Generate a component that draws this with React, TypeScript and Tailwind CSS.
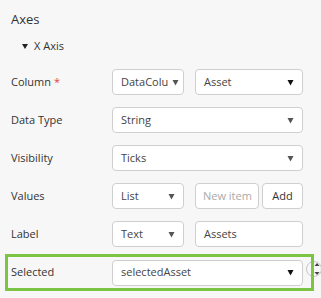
import React from "react";

function Caret({ dark }: { dark?: boolean }) {
  return (
    <svg width="7" height="7" viewBox="0 0 7 7" className="shrink-0 ml-[4px]">
      <path d="M0.5 1 H6.5 L3.5 6.5 Z" fill={dark ? "#111" : "#555"} />
    </svg>
  );
}

function Select({ value, w, dark }: { value: string; w: string; dark?: boolean }) {
  return (
    <div
      className={`${w} h-[26px] flex items-center justify-between pl-[8px] pr-[8px] bg-white border border-[#cfcfcf] rounded-[4px] text-[#444] whitespace-nowrap`}
    >
      <span>{value}</span>
      <Caret dark={dark} />
    </div>
  );
}

function Row({ label, children, required }: { label: string; children: React.ReactNode; required?: boolean }) {
  return (
    <div className="flex items-center h-[26px]">
      <div className="w-[112px] pl-[11px] text-[#333]">
        {label}
        {required && <span className="text-[#e04848] ml-[3px]">*</span>}
      </div>
      {children}
    </div>
  );
}

export default function App() {
  return (
    <div className="relative w-[321px] h-[298px] bg-[#f7f7f7] overflow-hidden font-['Open_Sans',sans-serif] text-[11px]">
      <div className="pl-[11px] pt-[9px] text-[13px] leading-[20px] text-[#333]">Axes</div>
      <div className="flex items-center h-[18px] mt-[8px] pl-[22px] text-[#333]">
        <svg width="6" height="5" viewBox="0 0 6 5" className="mr-[6px]">
          <path d="M0 0 H6 L3 5 Z" fill="#222" />
        </svg>
        X Axis
      </div>
      <div className="flex flex-col gap-[12px] mt-[14px]">
        <Row label="Column" required>
          <Select value="DataColu" w="w-[72px]" />
          <div className="ml-[11px]">
            <Select value="Asset" w="w-[108px]" dark />
          </div>
        </Row>
        <Row label="Data Type">
          <Select value="String" w="w-[191px]" />
        </Row>
        <Row label="Visibility">
          <Select value="Ticks" w="w-[191px]" />
        </Row>
        <Row label="Values">
          <Select value="List" w="w-[72px]" />
          <div className="ml-[11px] w-[64px] h-[26px] flex items-center pl-[7px] bg-white border border-[#cfcfcf] rounded-[4px] text-[#aaa] whitespace-nowrap">
            New item
          </div>
          <div className="ml-[3px] w-[41px] h-[26px] flex items-center justify-center bg-white border border-[#cfcfcf] rounded-[4px] text-[#333]">
            Add
          </div>
        </Row>
        <Row label="Label">
          <Select value="Text" w="w-[72px]" />
          <div className="ml-[11px] w-[108px] h-[26px] flex items-center pl-[8px] bg-white border border-[#cfcfcf] rounded-[4px] text-[#444]">
            Assets
          </div>
        </Row>
      </div>
      <div className="absolute left-[306px] top-[261px] w-[16px] h-[16px] rounded-full border border-[#c8c8c8] flex flex-col items-center justify-center">
        <svg width="6" height="12" viewBox="0 0 6 12" className="ml-[6px]">
          <path d="M3 0 L5.5 3 H0.5 Z M3 12 L5.5 9 H0.5 Z" fill="#444" />
        </svg>
      </div>
      <div className="relative ml-[5px] mt-[7px] w-[309px] h-[37px] border-[3px] border-[#7cc443] flex items-center">
        <div className="w-[104px] pl-[3px] text-[#333]">Selected</div>
        <Select value="selectedAsset" w="w-[191px]" dark />
      </div>
    </div>
  );
}
